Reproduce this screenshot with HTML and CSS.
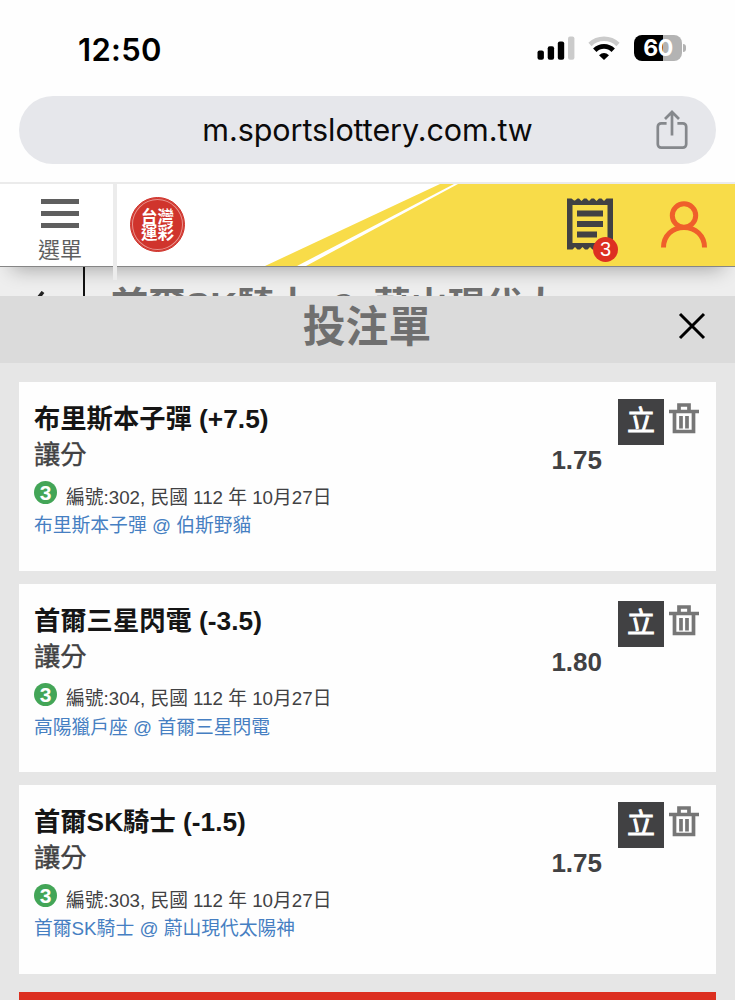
FILE: index.html
```html
<!DOCTYPE html>
<html lang="zh-Hant">
<head>
  <meta charset="UTF-8" />
  <meta name="viewport" content="width=device-width, initial-scale=1.0"/>
  <title>投注單</title>
  <link rel="stylesheet" href="styles.css">
</head>
<body>

  <div class="status-bar">
    <span class="time">12:50</span>
    <div class="status-icons">
      <svg class="signal" width="38" height="26" viewBox="0 0 38 26">
        <rect x="0.5" y="15.5" width="6.4" height="9.3" rx="2"/>
        <rect x="10.7" y="11.3" width="6.4" height="13.5" rx="2"/>
        <rect x="20.8" y="6.5" width="6.4" height="18.3" rx="2"/>
        <rect x="31" y="1.5" width="6.4" height="23.3" rx="2" fill="#cbcbcb"/>
      </svg>
      <svg class="wifi" width="32" height="26" viewBox="0 0 32 26">
        <path d="M2 9.500a20 20 0 0 1 28 0" fill="none" stroke="#cbcbcb" stroke-width="4.6"/>
        <path d="M6.800 15.200a13 13 0 0 1 18.400 0" fill="none" stroke="#000" stroke-width="4.8"/>
        <path d="M11 20.200q5-4.600 10 0L16 25z"/>
      </svg>
      <div class="battery"><span>60</span></div>
    </div>
  </div>

  <div class="url-bar">
    <span class="url">m.sportslottery.com.tw</span>
    <svg class="share" width="32" height="40" viewBox="0 0 32 40" fill="none" stroke="#85888c" stroke-width="2.7">
      <path d="M10.6 13.3H5.2a3.4 3.4 0 0 0-3.4 3.4v17.6a3.4 3.4 0 0 0 3.4 3.4h21.6a3.4 3.4 0 0 0 3.4-3.4V16.700a3.400 3.400 0 0 0-3.400-3.400H21.400"/>
      <path d="M16 25.500V2.500M9 9l7-7 7 7"/>
    </svg>
  </div>

  <header class="site-header">
    <svg class="header-bg" width="735" height="82" viewBox="0 0 735 82">
      <path d="M265 82L440 0H735V82z" fill="#f8dc49"/>
      <path d="M297 82h9L458 0h-4z" fill="#fff"/>
    </svg>
    <div class="menu">
      <div class="menu-lines"><i></i><i></i><i></i></div>
      <span>選單</span>
    </div>
    <div class="logo"><span>台灣<br>運彩</span></div>
    <div class="header-icons">
      <div class="ticket">
        <svg width="46" height="52" viewBox="0 0 46 52">
          <path fill="#414143" fill-rule="evenodd" d="M0 .5h4.500l2.500 2h1l2.500-2h1.500l2.500 2.500 2.500-2.500h2.500l2.500 2.500 2.500-2.500h2.500l2.500 2.500 2.500-2.500h2.500l2.500 2.500 2.500-2.500H46v51h-5.500l-2.500-2.500-2.500 2.500H33l-2.500-2.500-2.500 2.500h-2.500L23 49l-2.500 2.500H18L15.500 49 13 51.500h-2.500L8 49l-2.500 2.500H0zM5.500 7v38h35V7z"/>
          <path d="M10 15.500h26M10 26h26M10 36.500h20" stroke="#414143" stroke-width="5.800"/>
        </svg>
        <span class="badge">3</span>
      </div>
      <svg class="user" width="46" height="47" viewBox="0 0 46 47" fill="none" stroke="#ef5f2b" stroke-width="5">
        <circle cx="23" cy="14.500" r="11.700"/>
        <path d="M2.500 46.500c0-12 9-20 20.500-20s20.500 8 20.500 20"/>
      </svg>
    </div>
  </header>

  <div class="page-title">
    <svg class="back" width="12" height="22" viewBox="0 0 12 22"><path d="M10 1L2 11l8 10" fill="none" stroke="#222" stroke-width="3.500"/></svg>
    <h2>首爾SK騎士<span>@</span>蔚山現代太</h2>
  </div>

  <div class="slip">
    <div class="slip-header">
      <h1>投注單</h1>
      <svg class="close" width="28" height="28" viewBox="0 0 28 28"><path d="M2 2l24 24M26 2L2 26" stroke="#000" stroke-width="3"/></svg>
    </div>

    <div class="bet-list">
      <div class="bet-card">
        <div class="bet-info">
          <div class="bet-name">布里斯本子彈 (+7.5)</div>
          <div class="bet-type">讓分</div>
          <div class="bet-meta"><b>3</b>編號:302, 民國 112 年 10月27日</div>
          <div class="bet-match">布里斯本子彈 @ 伯斯野貓</div>
        </div>
        <div class="odds">1.75</div>
        <div class="single">立</div>
        <svg class="trash" width="30" height="31" viewBox="0 0 30 31"><path d="M0 8.500h30M10 7V2h10v5M5.500 9v19.500h19V9M12 13v12.500M18 13v12.500" fill="none" stroke="#767676" stroke-width="3.700"/></svg>
      </div>

      <div class="bet-card">
        <div class="bet-info">
          <div class="bet-name">首爾三星閃電 (-3.5)</div>
          <div class="bet-type">讓分</div>
          <div class="bet-meta"><b>3</b>編號:304, 民國 112 年 10月27日</div>
          <div class="bet-match">高陽獵戶座 @ 首爾三星閃電</div>
        </div>
        <div class="odds">1.80</div>
        <div class="single">立</div>
        <svg class="trash" width="30" height="31" viewBox="0 0 30 31"><path d="M0 8.500h30M10 7V2h10v5M5.500 9v19.500h19V9M12 13v12.500M18 13v12.500" fill="none" stroke="#767676" stroke-width="3.700"/></svg>
      </div>

      <div class="bet-card">
        <div class="bet-info">
          <div class="bet-name">首爾SK騎士 (-1.5)</div>
          <div class="bet-type">讓分</div>
          <div class="bet-meta"><b>3</b>編號:303, 民國 112 年 10月27日</div>
          <div class="bet-match">首爾SK騎士 @ 蔚山現代太陽神</div>
        </div>
        <div class="odds">1.75</div>
        <div class="single">立</div>
        <svg class="trash" width="30" height="31" viewBox="0 0 30 31"><path d="M0 8.500h30M10 7V2h10v5M5.500 9v19.500h19V9M12 13v12.500M18 13v12.500" fill="none" stroke="#767676" stroke-width="3.700"/></svg>
      </div>
    </div>

    <div class="submit-bar"></div>
  </div>

</body>
</html>
```
FILE: styles.css
```css
:root {
  --red: #dc2f20;
  --dark: #414143;
  --bg: #e6e6e6;
}

* {
  box-sizing: border-box;
}

body {
  margin: 0;
  height: 1000px;
  overflow: hidden;
  font-family: "Liberation Sans", "Noto Sans CJK TC", sans-serif;
  background: #fefefe;
  color: var(--dark);
}

h1, h2 {
  margin: 0;
}

svg {
  display: block;
  flex-shrink: 0;
}

/* phone status bar */
.status-bar {
  height: 96px;
  padding: 29px 53px 0 78px;
  display: flex;
  justify-content: space-between;
  align-items: flex-start;
  font-family: Inter, sans-serif;
  color: #000;
}

.time {
  font-size: 31px;
  line-height: 41px;
  font-weight: 600;
  letter-spacing: 0.3px;
}

.status-icons {
  display: flex;
  padding-top: 6px;
}

.wifi {
  margin: 0 14px 0 13px;
}

.battery {
  position: relative;
  width: 48px;
  height: 26px;
  border-radius: 8px;
  background: linear-gradient(90deg, #000 60%, #b3b3b3 60%);
  color: #fff;
  font-size: 23px;
  line-height: 27px;
  font-weight: 700;
  letter-spacing: -0.5px;
  text-align: center;
}

.battery::after {
  content: "";
  position: absolute;
  right: -4px;
  top: 9px;
  width: 3px;
  height: 8px;
  border-radius: 0 4px 4px 0;
  background: #b3b3b3;
}

.url-bar {
  position: relative;
  height: 68px;
  margin: 0 19px 18px;
  border-radius: 34px;
  background: #e6e7eb;
  display: flex;
  align-items: center;
  justify-content: center;
}

.url {
  padding-bottom: 2px;
  font-family: Inter, sans-serif;
  font-size: 30.5px;
  letter-spacing: -0.07px;
  color: #0b0b0b;
}

.share {
  position: absolute;
  right: 28px;
  top: 14px;
}

/* site header */
.site-header {
  position: relative;
  z-index: 2;
  height: 85px;
  border-top: 2px solid #ebebeb;
  border-bottom: 1px solid #868686;
  background: #fff;
  box-shadow: 0 14px 20px -12px rgba(0,0,0,0.32);
  clip-path: inset(0 0 -30px 0);
  display: flex;
}

.header-bg {
  position: absolute;
  left: 0;
  top: 0;
}

.menu {
  width: 117px;
  height: 96px;
  padding: 15px 0 0 38px;
  border-right: 4px solid #ececec;
  flex-shrink: 0;
  z-index: 1;
}

.menu-lines {
  width: 38px;
  margin-left: 3px;
  display: grid;
  gap: 7px;
}

.menu-lines i {
  height: 5px;
  background: #5f5f5f;
}

.menu span {
  display: block;
  margin-top: 8px;
  font-size: 22px;
  line-height: 30px;
  color: #5f5f5f;
}

.logo {
  width: 55px;
  height: 55px;
  margin: 13px 0 0 13px;
  border: 1px solid #d0342c;
  border-radius: 50%;
  background: #d0342c;
  box-shadow: inset 0 0 0 1px #d0342c, inset 0 0 0 2px #e99590;
  display: flex;
  align-items: center;
  justify-content: center;
  color: #fff;
  font-size: 16.5px;
  line-height: 16px;
  font-weight: 700;
  z-index: 1;
}

.header-icons {
  display: flex;
  margin-left: auto;
  padding: 14px 28px 0 0;
  z-index: 1;
}

.ticket {
  position: relative;
}

.badge {
  position: absolute;
  left: 26px;
  top: 39px;
  width: 25px;
  height: 25px;
  border-radius: 50%;
  background: #dd3022;
  color: #fff;
  font-size: 20px;
  line-height: 25px;
  text-align: center;
}

.user {
  margin: 3px 0 0 48px;
}

/* page behind the bet slip */
.page-title {
  height: 29px;
  overflow: hidden;
  background: #eeeeee;
  display: flex;
  align-items: flex-start;
}

.back {
  margin: 24px 0 0 33px;
}

.page-title h2 {
  height: 29px;
  margin-left: 38px;
  padding: 12px 0 0 26px;
  border-left: 2px solid #111;
  font-size: 37.2px;
  line-height: 54px;
  font-weight: 700;
  white-space: nowrap;
  color: #6f6f6f;
}

.page-title span {
  display: inline-block;
  width: 62px;
  font-size: 27px;
  font-weight: 400;
  line-height: 40px;
  text-align: center;
  vertical-align: 5px;
}

/* bet slip */
.slip {
  height: 704px;
  background: var(--bg);
}

.slip-header {
  position: relative;
  height: 67px;
  background: #dbdbdb;
  text-align: center;
}

.slip-header h1 {
  padding: 1px 1px 0 0;
  font-size: 42.8px;
  line-height: 60px;
  font-weight: 700;
  color: #6f6f6f;
}

.close {
  position: absolute;
  right: 29px;
  top: 16px;
}

.bet-list {
  display: grid;
  gap: 13px;
  padding: 19px 19px 0;
}

.bet-card {
  height: 188.5px;
  padding: 17px 17px 0 15px;
  background: #fefefe;
  display: flex;
  align-items: flex-start;
}

.bet-info {
  flex-grow: 1;
  padding-top: 2px;
  white-space: nowrap;
}

.bet-name, .bet-type {
  font-size: 26.3px;
  line-height: 36px;
}

.bet-name {
  font-weight: 700;
  color: #151515;
}

.bet-type {
  -webkit-text-stroke: 0.4px var(--dark);
}

.bet-meta {
  display: flex;
  align-items: center;
  margin-top: 8px;
  font-size: 18.75px;
  line-height: 32px;
}

.bet-meta b {
  width: 23px;
  height: 23px;
  margin: 0 9px 10px 0;
  border-radius: 50%;
  background: #43a557;
  color: #fff;
  font-size: 21px;
  line-height: 23px;
  text-align: center;
}

.bet-match {
  margin-top: -2px;
  font-size: 18.8px;
  line-height: 27px;
  color: #467fc2;
}

.odds {
  margin: 46px 16px 0 0;
  font-size: 26px;
  line-height: 30px;
  font-weight: 700;
}

.single {
  width: 46px;
  height: 46px;
  background: var(--dark);
  color: #fff;
  font-size: 28px;
  line-height: 46px;
  text-align: center;
  -webkit-text-stroke: 0.8px #fff;
}

.trash {
  margin: 4px 0 0 5px;
}

.submit-bar {
  height: 20px;
  margin: 18px 19px 0;
  background: var(--red);
}
```
